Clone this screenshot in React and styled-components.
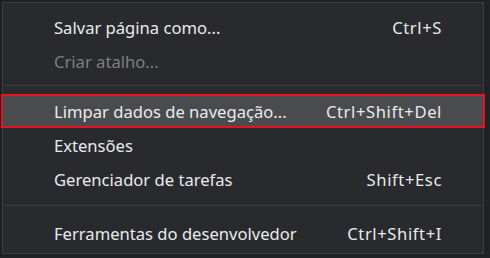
import styled, { createGlobalStyle } from "styled-components";

const GlobalStyle = createGlobalStyle`
  html, body {
    margin: 0;
    padding: 0;
    background: #202124;
  }
  body {
    font-family: "Noto Sans", "Open Sans", sans-serif;
  }
`;

const items = [
  { label: "Salvar página como...", shortcut: "Ctrl+S" },
  { label: "Criar atalho...", disabled: true },
  { separator: true },
  { label: "Limpar dados de navegação...", shortcut: "Ctrl+Shift+Del", active: true },
  { label: "Extensões" },
  { label: "Gerenciador de tarefas", shortcut: "Shift+Esc" },
  { separator: true, wide: true },
  { label: "Ferramentas do desenvolvedor", shortcut: "Ctrl+Shift+I" },
];

const App = () => {
  return (
    <>
      <GlobalStyle />
      <Page>
        <Menu>
          {items.map((item, i) =>
            item.separator ? (
              <Separator key={i} $wide={item.wide} />
            ) : (
              <Item key={i} $active={item.active} $disabled={item.disabled}>
                <Label>{item.label}</Label>
                {item.shortcut && <Shortcut>{item.shortcut}</Shortcut>}
              </Item>
            )
          )}
        </Menu>
        <Edge />
      </Page>
    </>
  );
};

const Page = styled.div`
  display: flex;
  align-items: flex-start;
  height: 258px;
  padding: 2px 0 0 2px;
  box-sizing: border-box;
  overflow: hidden;
`;

const Menu = styled.div`
  width: 482px;
  box-sizing: border-box;
  background: #292a2d;
  border: 1px solid #3c3d40;
  padding: 7px 0 3px;
  display: flex;
  flex-direction: column;
`;

const Edge = styled.div`
  flex: 1;
  height: 100%;
  background: #202124;
`;

const Item = styled.div`
  position: relative;
  height: 34px;
  display: flex;
  align-items: center;
  justify-content: space-between;
  padding: 0 41px 0 51px;
  font-size: 16.6px;
  color: ${(p) => (p.$disabled ? "#7d7e81" : "#e8eaed")};
  background: ${(p) => (p.$active ? "#4a4b4f" : "transparent")};

  ${(p) =>
    p.$active &&
    `
    &::after {
      content: "";
      position: absolute;
      top: 0;
      bottom: 0;
      left: -2px;
      right: -2px;
      border: 2px solid #e81123;
    }
  `}
`;

const Label = styled.span`
  white-space: nowrap;
`;

const Shortcut = styled.span`
  white-space: nowrap;
  letter-spacing: 0.6px;
`;

const Separator = styled.div`
  height: ${(p) => (p.$wide ? "20px" : "16px")};
  display: flex;
  align-items: flex-start;
  padding: 0 2px;

  &::before {
    content: "";
    flex: 1;
    height: 1px;
    margin-top: ${(p) => (p.$wide ? "9px" : "7px")};
    background: #3f4043;
  }
`;

export default App;
